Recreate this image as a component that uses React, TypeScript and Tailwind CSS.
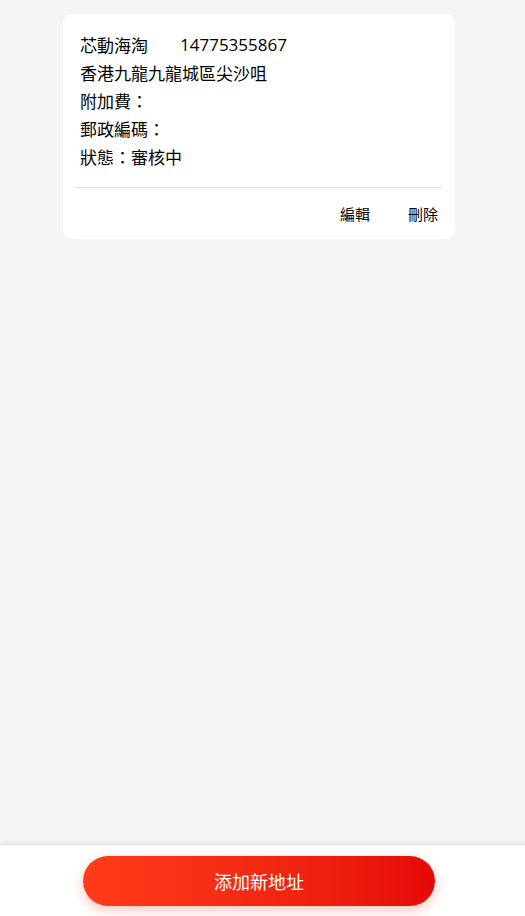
import React from 'react'

const font = { fontFamily: '"Noto Sans CJK TC", "Noto Sans", sans-serif' }
const digits = { fontFamily: '"Open Sans", "Noto Sans CJK TC", sans-serif' }

type Address = {
  name: string
  phone: string
  address: string
  surcharge: string
  postcode: string
  status: string
}

const addresses: Address[] = [
  {
    name: '芯動海淘',
    phone: '14775355867',
    address: '香港九龍九龍城區尖沙咀',
    surcharge: '',
    postcode: '',
    status: '審核中',
  },
]

function AddressCard({ a }: { a: Address }) {
  return (
    <div className="ml-[63px] w-[392px] rounded-[10px] bg-white">
      <div className="px-[17px] pt-[17px] pb-[16px] text-[17px] leading-[28px] text-black">
        <div className="flex">
          <span>{a.name}</span>
          <span className="ml-[32px]" style={digits}>{a.phone}</span>
        </div>
        <div>{a.address}</div>
        <div>附加費：{a.surcharge}</div>
        <div>郵政編碼：{a.postcode}</div>
        <div>狀態：{a.status}</div>
      </div>
      <div className="mx-[13px] h-px bg-[#e0e0e0]" />
      <div className="flex justify-end gap-[38px] pt-[16px] pb-[15px] pr-[17px] text-[15px] leading-[20px] text-black">
        <button>編輯</button>
        <button>刪除</button>
      </div>
    </div>
  )
}

export default function App() {
  return (
    <div className="flex h-screen flex-col bg-[#f5f5f5]" style={font}>
      <main className="flex-1 pt-[14px]">
        {addresses.map((a, i) => (
          <AddressCard key={i} a={a} />
        ))}
      </main>

      {/* Bottom action bar */}
      <div className="h-[72px] border-t border-[#e4e4e4] bg-white pt-[11px] shadow-[0_-2px_4px_rgba(0,0,0,0.06)]">
        <button className="ml-[83px] flex h-[50px] w-[352px] items-center justify-center rounded-full bg-gradient-to-r from-[#ff3c1a] to-[#e50808] text-[18px] text-white shadow-[0_4px_12px_rgba(255,60,30,0.3)]">
          添加新地址
        </button>
      </div>
    </div>
  )
}
